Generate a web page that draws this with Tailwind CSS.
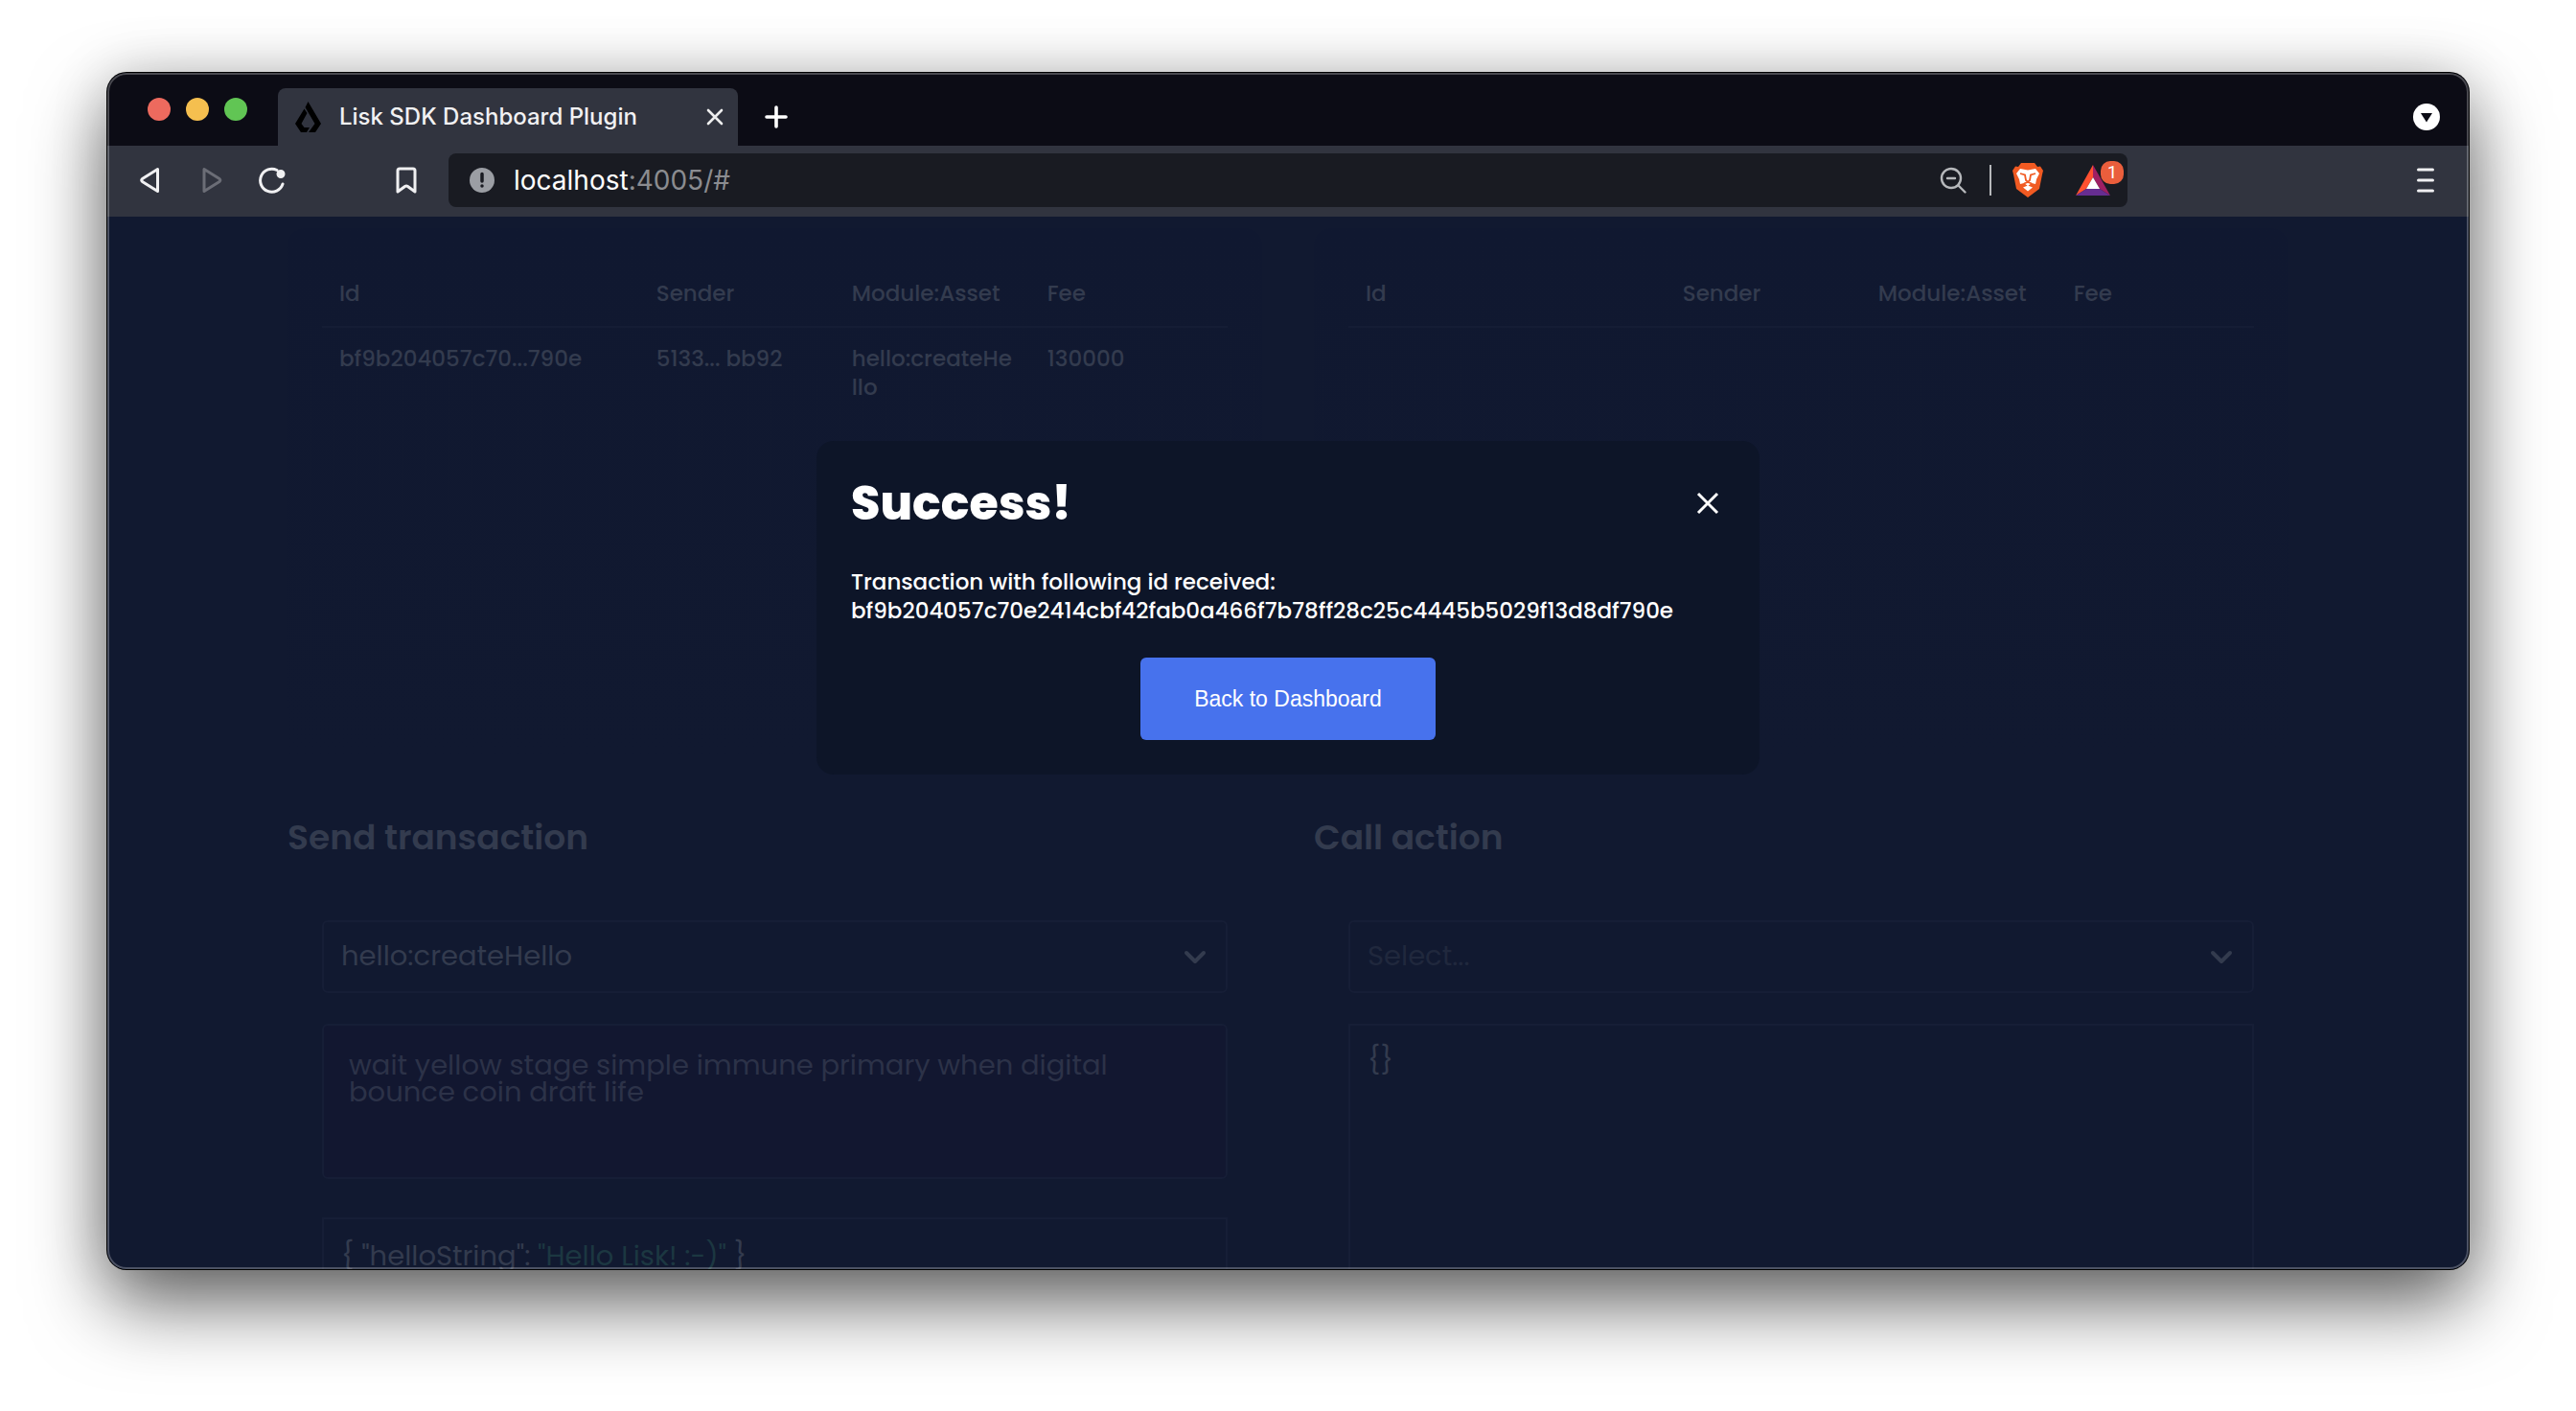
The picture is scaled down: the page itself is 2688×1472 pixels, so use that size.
<!DOCTYPE html>
<html lang="en">
<head>
<meta charset="utf-8">
<title>Lisk SDK Dashboard Plugin</title>
<script src="https://cdn.jsdelivr.net/npm/@tailwindcss/browser@4"></script>
</head>
<body class="h-screen overflow-hidden bg-white px-28 pt-[76px] pb-[148px] font-['Poppins','Inter',sans-serif]">
<div class="relative flex h-full flex-col overflow-hidden rounded-[20px] bg-[#111930] shadow-[0_0_0_1px_#000,0_36px_80px_rgba(0,0,0,0.6),0_0_60px_rgba(0,0,0,0.15)]">

  <!-- Tab strip -->
  <header class="flex h-[76px] shrink-0 items-end bg-[#0c0c15] pr-[30px]">
    <div class="flex gap-4 self-center pl-[42px]">
      <span class="size-6 rounded-full bg-[#ed6a5e]"></span>
      <span class="size-6 rounded-full bg-[#f5bf4f]"></span>
      <span class="size-6 rounded-full bg-[#61c554]"></span>
    </div>
    <div class="ml-8 flex h-[60px] w-[480px] items-center rounded-t-lg bg-[#31343f] pr-[14px] pl-[18px]">
      <svg class="h-8 w-7" viewBox="0 0 28 32"><path d="M13.500 0 27 23 21 32H14L20.500 23 10.500 6Z"/><path d="M9.500 7.500 12.500 12 6.500 23 9.500 27H15L12 32H6L0 23Z"/></svg>
      <span class="ml-[18px] flex-1 font-['Inter',sans-serif] text-2xl font-medium whitespace-nowrap text-[#f1f1f3]">Lisk SDK Dashboard Plugin</span>
      <button aria-label="Close tab" class="size-5"><svg viewBox="0 0 20 20" fill="none" stroke="#eee" stroke-width="2.600" stroke-linecap="round"><path d="M3 3 17 17M17 3 3 17"/></svg></button>
    </div>
    <button aria-label="New tab" class="mb-[18px] ml-7 size-6"><svg viewBox="0 0 24 24" fill="none" stroke="#fff" stroke-width="3.600" stroke-linecap="round"><path d="M12 2V22M2 12H22"/></svg></button>
    <button aria-label="Tab search" class="mb-4 ml-auto size-7"><svg viewBox="0 0 28 28"><circle cx="14" cy="14" r="14" fill="#fff"/><path fill="#0c0c15" d="M8 10H20L14 19.500Z"/></svg></button>
  </header>

  <!-- Toolbar -->
  <nav class="flex h-[74px] shrink-0 items-center bg-[#31343f] pr-9 pb-[2px] pl-[33px]">
    <button aria-label="Back" class="h-7 w-6"><svg viewBox="0 0 24 28" fill="none" stroke="#f0f0f2" stroke-width="3" stroke-linejoin="round"><path d="M19.500 2.500V25.500L3.500 15.500Q2 14 3.500 12.500Z"/></svg></button>
    <button aria-label="Forward" class="ml-10 h-7 w-6"><svg viewBox="0 0 24 28" fill="none" stroke="#6b6d76" stroke-width="3" stroke-linejoin="round"><path d="M4 2.500V25.500L20 15.500Q21.500 14 20 12.500Z"/></svg></button>
    <button aria-label="Reload" class="ml-[37px] size-7"><svg viewBox="0 0 28 28" fill="none" stroke="#f0f0f2" stroke-width="3" stroke-linecap="round"><path d="M19 3.500A12 12 0 1 0 25 18"/><circle cx="23" cy="7.500" r="3.500" fill="#f0f0f2" stroke-width="2"/></svg></button>
    <button aria-label="Bookmark" class="ml-[114px] h-7 w-6"><svg viewBox="0 0 24 28" fill="none" stroke="#f0f0f2" stroke-width="3" stroke-linejoin="round"><path d="M3 4Q3 2 5 2H19Q21 2 21 4V26L13.500 20.500Q12 19.500 10.500 20.500L3 26Z"/></svg></button>
    <div class="ml-8 flex h-14 w-[1752px] items-center rounded-lg bg-[#191b22] pr-1 pl-[22px]">
      <svg class="size-[26px]" viewBox="0 0 26 26"><circle cx="13" cy="13" r="13" fill="#9b9ea4"/><path stroke="#191b22" stroke-width="3.500" stroke-linecap="round" d="M13 6.500V14M13 19v.1"/></svg>
      <a href="#" class="ml-5 flex-1 font-['Inter',sans-serif] text-[28px] text-[#8b8c90]"><span class="text-white">localhost</span>:4005/#</a>
      <svg class="size-7" viewBox="0 0 28 28" fill="none" stroke="#b6b8bb" stroke-width="2.400" stroke-linecap="round"><circle cx="12" cy="12" r="10"/><path d="M8 12H16M19.500 19.500 26.500 26.500"/></svg>
      <span class="ml-6 h-8 w-[2px] bg-[#b6b8bb]"></span>
      <svg class="ml-[22px] h-9 w-8" viewBox="0 0 32 36"><path fill="#f15a22" d="M9 0H23L26 4 29 3.500 32 8 31 12 28 27 16 36 4 27 1 12 0 8 3 3.500 6 4Z"/><path fill="#fff" d="M8 6 16 7.500 24 6 28 11 25 17 24 22 20 21 16 24 12 21 8 22 7 17 4 11ZM11 25.500 16 23.500 21 25.500 16 29.500Z"/><path stroke="#f15a22" stroke-width="1.800" fill="none" d="M8 11 13 12.500 14 18 16 20 18 18 19 12.500 24 11M12 21.500 16 20 20 21.500"/></svg>
      <div class="relative ml-[34px] h-9 w-[50px]">
        <svg class="mt-[2px] h-8 w-9" viewBox="0 0 36 32"><path fill="#ff5030" d="M18 0V13L11 25 0 32Z"/><path fill="#9e1f63" d="M18 0 36 32 25 25 18 13Z"/><path fill="#662d91" d="M0 32 11 25H25L36 32Z"/><path fill="#fff" d="M18 13 25 25H11Z"/></svg>
        <span class="absolute -top-[2px] left-[26px] flex size-6 items-center justify-center rounded-[10px] bg-[#ea5e3c] font-['Roboto',sans-serif] text-lg text-white">1</span>
      </div>
    </div>
    <button aria-label="Menu" class="ml-auto h-[26px] w-[18px]"><svg viewBox="0 0 18 26" stroke="#f0f0f2" stroke-width="3" stroke-linecap="round"><path d="M1.500 2H16.500M1.500 13H16.500M1.500 24H16.500"/></svg></button>
  </nav>

  <!-- Dashboard -->
  <main class="relative flex-1 overflow-hidden bg-[#111930] px-[188px] pt-3 text-[#333b4e]">
    <div class="grid grid-cols-2 gap-x-[54px]">
      <section class="h-[562px] rounded-[18px] bg-linear-to-b from-[#101830] to-[#111930] px-9 pt-8">
        <table class="w-full table-fixed text-left text-[23px] leading-[30px] font-medium">
          <thead><tr class="border-b-2 border-[#151d35]">
            <th class="w-[35%] px-[18px] pt-[21px] pb-[19px] font-medium">Id</th><th class="w-[204px] px-[18px] pt-[21px] pb-[19px] font-medium">Sender</th><th class="w-[204px] px-[18px] pt-[21px] pb-[19px] font-medium">Module:Asset</th><th class="px-[18px] pt-[21px] pb-[19px] font-medium">Fee</th>
          </tr></thead>
          <tbody><tr class="align-top"><td class="px-[18px] pt-[17px]">bf9b204057c70...790e</td><td class="px-[18px] pt-[17px]">5133... bb92</td><td class="pt-[17px] pr-4 pl-[18px] break-all">hello:createHello</td><td class="px-[18px] pt-[17px]">130000</td></tr></tbody>
        </table>
      </section>
      <section class="h-[562px] rounded-[18px] bg-linear-to-b from-[#101830] to-[#111930] px-9 pt-8">
        <table class="w-full table-fixed text-left text-[23px] leading-[30px] font-medium">
          <thead><tr class="border-b-2 border-[#151d35]">
            <th class="w-[35%] px-[18px] pt-[21px] pb-[19px] font-medium">Id</th><th class="w-[204px] px-[18px] pt-[21px] pb-[19px] font-medium">Sender</th><th class="w-[204px] px-[18px] pt-[21px] pb-[19px] font-medium">Module:Asset</th><th class="px-[18px] pt-[21px] pb-[19px] font-medium">Fee</th>
          </tr></thead>
        </table>
      </section>
      <section class="pt-[50px]">
        <h2 class="text-4xl leading-[48px] font-semibold">Send transaction</h2>
        <div class="flex flex-col px-9 pt-[62px] text-[29px]">
          <div class="relative">
            <select aria-label="Transaction type" class="h-[76px] w-full appearance-none rounded-md border-2 border-[#161e36] bg-transparent px-[18px]"><option>hello:createHello</option></select>
            <svg class="absolute top-[31px] right-[22px] h-4 w-6" viewBox="0 0 24 16" fill="none" stroke="#333b4e" stroke-width="4" stroke-linecap="round" stroke-linejoin="round"><path d="M3 3 12 12 21 3"/></svg>
          </div>
          <textarea aria-label="Passphrase" class="mt-8 h-[162px] resize-none rounded-md border-2 border-[#161e36] bg-[#121730] py-[27px] pr-9 pl-[26px] leading-7 text-[#2c3248]">wait yellow stage simple immune primary when digital bounce coin draft life</textarea>
          <pre aria-label="Transaction asset" contenteditable="true" class="mt-10 h-[320px] border-2 border-[#161e36] px-[18px] pt-[18px] font-['Poppins','Inter',sans-serif] leading-[40px]">{ "helloString": <span class="text-[#1c3741]">"Hello Lisk! :-)"</span> }</pre>
        </div>
      </section>
      <section class="pt-[50px]">
        <h2 class="text-4xl leading-[48px] font-semibold">Call action</h2>
        <div class="flex flex-col px-9 pt-[62px] text-[29px]">
          <div class="relative">
            <select aria-label="Action" class="h-[76px] w-full appearance-none rounded-md border-2 border-[#161e36] bg-transparent px-[18px] text-[#20283d]"><option>Select...</option></select>
            <svg class="absolute top-[31px] right-[22px] h-4 w-6" viewBox="0 0 24 16" fill="none" stroke="#333b4e" stroke-width="4" stroke-linecap="round" stroke-linejoin="round"><path d="M3 3 12 12 21 3"/></svg>
          </div>
          <textarea aria-label="Action parameters" class="mt-8 h-[522px] resize-none border-2 border-[#161e36] px-[18px] pt-4 leading-[40px]">{}</textarea>
        </div>
      </section>
    </div>

    <!-- Success dialog -->
    <div class="absolute inset-0 flex items-start justify-center pt-[234px]">
      <div role="dialog" aria-labelledby="dialog-title" class="flex w-[984px] flex-col rounded-[18px] bg-[#0d1528] p-9 text-white">
        <div class="flex items-center justify-between">
          <h1 id="dialog-title" class="text-[49px] leading-[58px] font-extrabold">Success!</h1>
          <button aria-label="Close" class="mr-[6px] size-6"><svg viewBox="0 0 24 24" fill="none" stroke="#fff" stroke-width="3"><path d="M2 2 22 22M22 2 2 22"/></svg></button>
        </div>
        <p class="mt-[38px] text-[23px] leading-[30px] font-medium">Transaction with following id received:<br>bf9b204057c70e2414cbf42fab0a466f7b78ff28c25c4445b5029f13d8df790e</p>
        <button class="mt-[34px] h-[86px] w-[308px] self-center rounded-md bg-[#4772ed] font-['Liberation_Sans',sans-serif] text-[23px]">Back to Dashboard</button>
      </div>
    </div>
  </main>
  <div class="pointer-events-none absolute inset-0 rounded-[20px] border-2 border-white/25"></div>
</div>
</body>
</html>
